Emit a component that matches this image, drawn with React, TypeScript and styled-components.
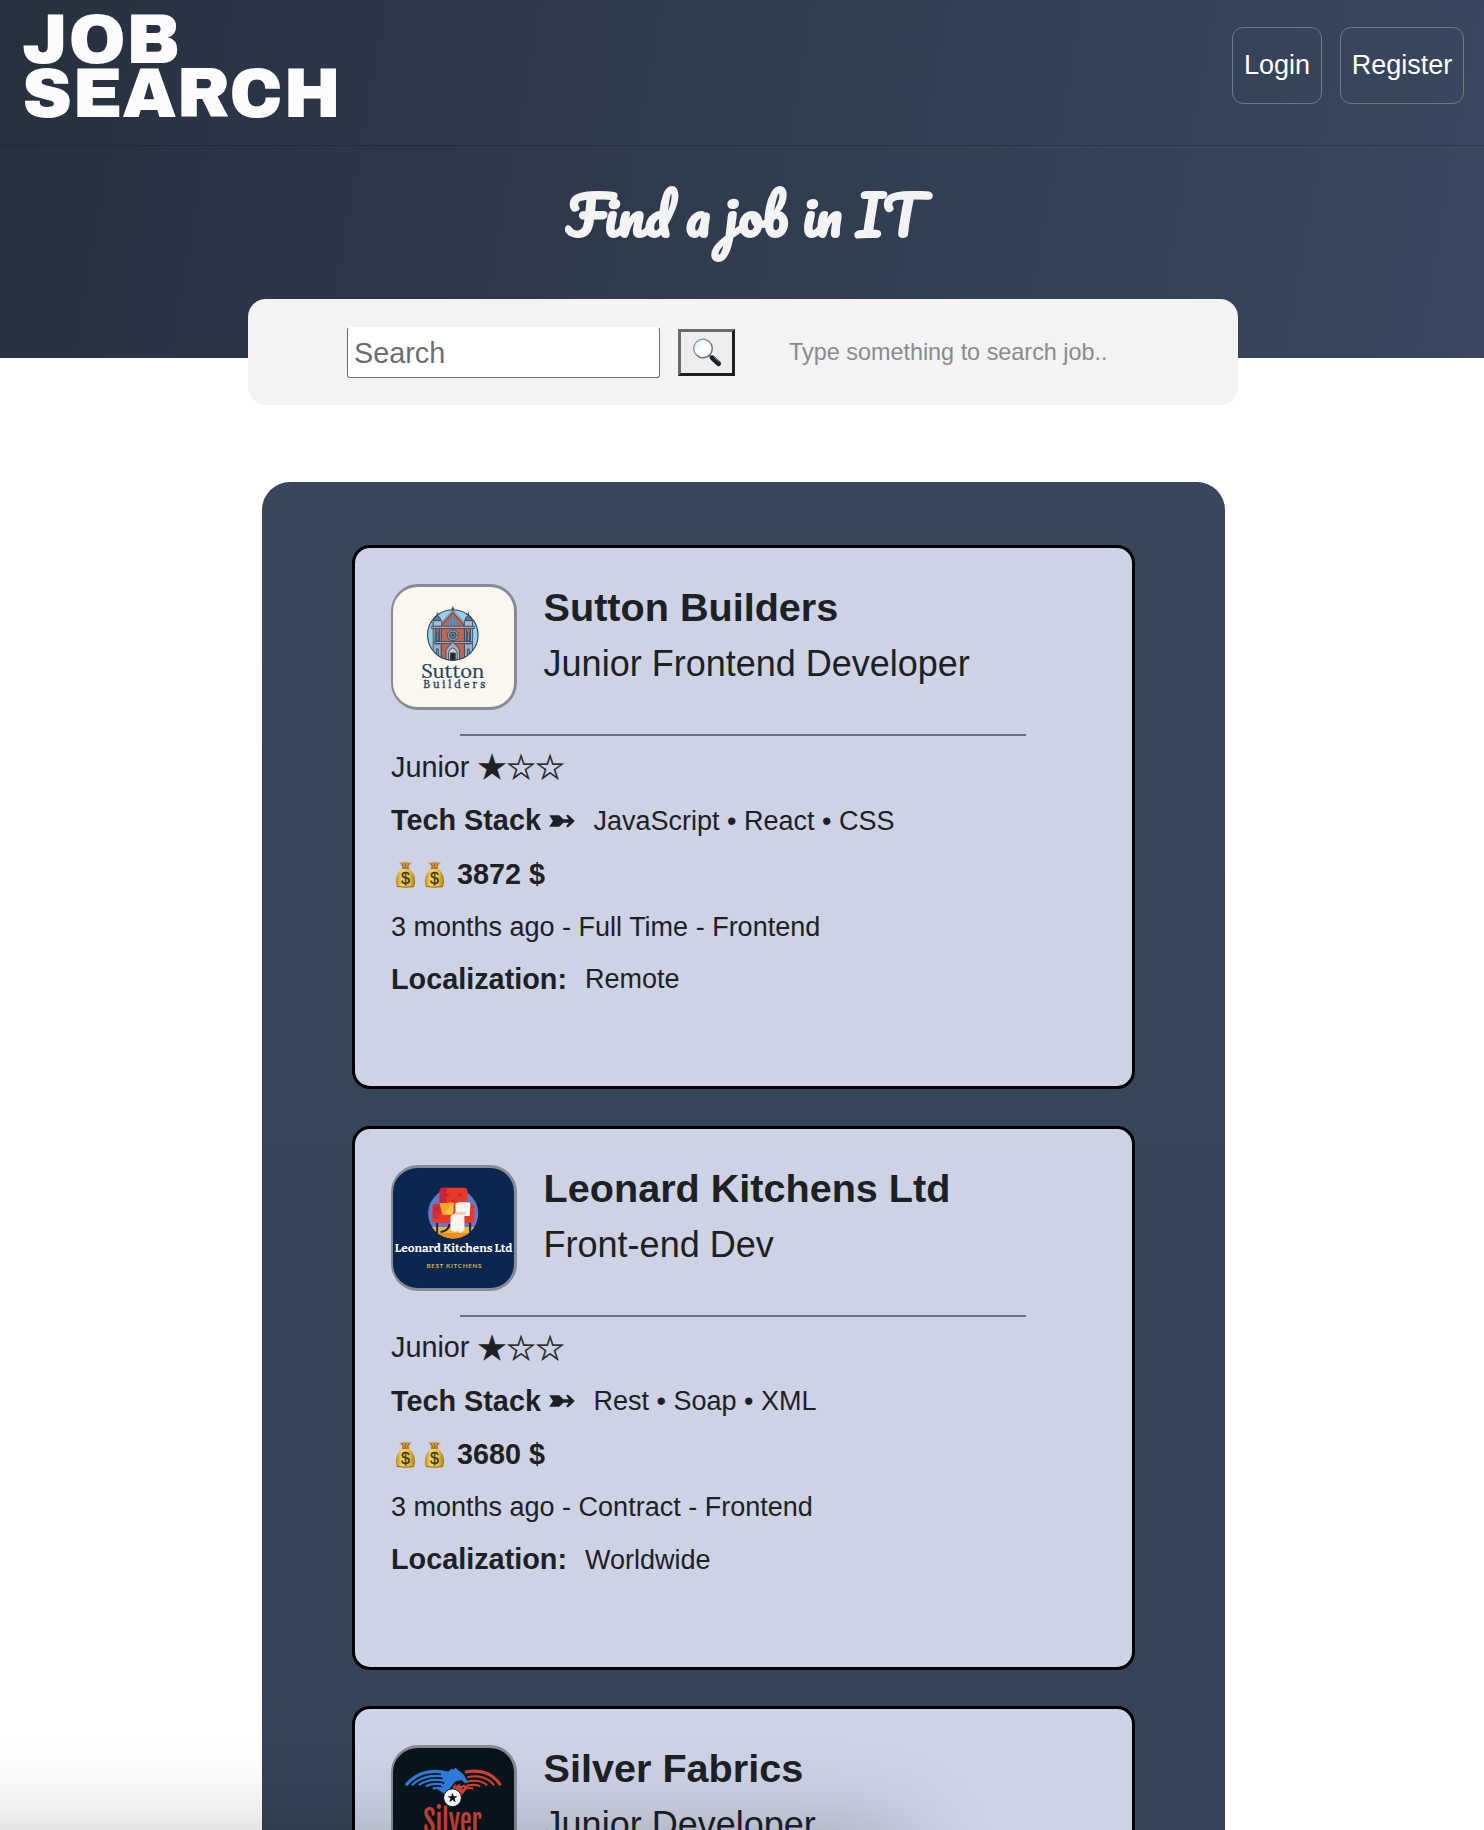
import React from "react";
import styled, { createGlobalStyle } from "styled-components";

const GlobalStyle = createGlobalStyle`
  *, *::before, *::after { box-sizing: border-box; }
  html, body { margin: 0; padding: 0; background: #fff; }
  body { font-family: "Liberation Sans", Arial, Helvetica, sans-serif; color: #1d2124; }
`;

const Page = styled.div`
  position: relative;
  height: 100vh;
  overflow: hidden;
  background: #fff;
`;

const Hero = styled.header`
  height: 358px;
  background: linear-gradient(100deg, #26313f 0%, #2d394b 35%, #334154 70%, #39485f 100%);
`;

const NavBar = styled.nav`
  display: flex;
  justify-content: space-between;
  align-items: flex-start;
  height: 146px;
  padding: 0 20px 0 0;
  border-bottom: 1px solid rgba(20, 28, 38, 0.35);
`;

const Wordmark = styled.svg`
  display: block;
  width: 360px;
  height: 140px;
  font-family: "Archivo Black", Inter, "Liberation Sans", sans-serif;
  font-weight: 900;
  font-synthesis: none;
  font-size: 70px;
  fill: #fcfcfc;
`;

const NavLinks = styled.div`
  display: flex;
  gap: 18px;
  padding-top: 27px;
`;

const NavButton = styled.a<{ $width: number }>`
  display: flex;
  align-items: center;
  justify-content: center;
  width: ${(p) => p.$width}px;
  height: 77px;
  padding-bottom: 1px;
  border: 1px solid #6e7a84;
  border-radius: 11px;
  color: #fff;
  font-size: 27px;
`;

const Slogan = styled.h1`
  margin: 0;
  padding-left: 566px;
  height: 152px;
  line-height: 137px;
  white-space: nowrap;
  font-family: Pacifico, Lato, sans-serif;
  font-weight: 400;
  font-size: 54px;
  color: #f3f3f3;
  -webkit-text-stroke: 2px #f3f3f3;
`;

const SearchPanel = styled.form`
  position: relative;
  display: flex;
  align-items: center;
  width: 990px;
  height: 106px;
  margin: -59px 0 0 248px;
  padding: 1px 0 0 99px;
  background: #f3f3f3;
  border-radius: 18px;
`;

const SearchInput = styled.input`
  width: 313px;
  height: 51px;
  padding: 2px 6px 0;
  border: 1px solid #6b6b6b;
  border-top-color: #fff;
  border-radius: 3px;
  background: #fff;
  font: 28.8px "Liberation Sans", Arial, sans-serif;
  &::placeholder { color: #6e6e6e; opacity: 1; }
`;

const SearchButton = styled.button`
  display: flex;
  align-items: center;
  justify-content: center;
  width: 57px;
  height: 47px;
  margin-left: 18px;
  padding: 0;
  border: 3px solid;
  border-color: #6b6b6b #1e1e1e #1e1e1e #6b6b6b;
  background: #ededed;
`;

const Hint = styled.span`
  margin-left: 54px;
  font-size: 23.4px;
  color: #898b8d;
`;

const JobList = styled.main`
  display: flex;
  flex-direction: column;
  align-items: center;
  gap: 36.5px;
  width: 963px;
  height: 1800px;
  margin: 77px 0 0 262px;
  padding-top: 63px;
  border-radius: 28px;
  background: linear-gradient(180deg, #38475c 0%, #354458 55%, #344256 100%);
`;

const Card = styled.article`
  flex: none;
  width: 783px;
  height: 544px;
  padding: 36px;
  border: 3px solid #000;
  border-radius: 18px;
  background: #cdd2e5;
`;

const CardHead = styled.div`
  display: flex;
  gap: 26.6px;
`;

const LogoFrame = styled.div<{ $bg: string }>`
  flex: none;
  width: 126px;
  height: 126px;
  border: 3px solid #878b96;
  border-left-width: 2px;
  border-radius: 27px;
  background: ${(p) => p.$bg};
  overflow: hidden;
`;

const LogoArt = styled.svg`
  display: block;
  width: 100%;
  height: 100%;
`;

const Company = styled.h2`
  margin: 0;
  font-size: 39.6px;
  line-height: 46px;
  white-space: nowrap;
`;

const Position = styled.h3`
  margin: 11px 0 0;
  font-size: 36px;
  font-weight: 400;
  line-height: 46px;
  white-space: nowrap;
`;

const Divider = styled.hr`
  width: 566px;
  height: 2px;
  margin: 24px 0 5px 69px;
  border: 0;
  background: #6d7080;
`;

const Row = styled.div<{ $size?: number; $drop?: number }>`
  display: flex;
  align-items: center;
  height: 52.8px;
  padding-top: ${(p) => p.$drop ?? 0}px;
  white-space: pre;
  font-size: ${(p) => p.$size ?? 28.8}px;
`;

const Stars = styled.span`
  margin-left: 7px;
  font-family: "DejaVu Sans", sans-serif;
  font-size: 34.6px;
  letter-spacing: -2px;
  line-height: 1;
  -webkit-text-stroke: 0.5px #1d2124;
`;

const Arrow = styled.svg`
  width: 26px;
  height: 14px;
  margin: 0 1px 0 8px;
`;

const Label = styled.strong`
  font-size: 28.8px;
`;

const Value = styled.span<{ $gap: number }>`
  margin-left: ${(p) => p.$gap}px;
  padding-top: 1px;
  font-size: 27px;
`;

const Bags = styled.span`
  display: flex;
  margin-right: 8px;
`;

const BagSvg = styled.svg`
  width: 29px;
  height: 29px;
`;

const BottomShade = styled.div`
  position: absolute;
  left: -200px;
  top: 100%;
  width: 1110px;
  height: 200px;
  box-shadow: 0 0 90px rgba(0, 0, 0, 0.2);
  pointer-events: none;
`;

function Magnifier() {
  return (
    <svg width="32" height="32" viewBox="0 0 32 32">
      <defs>
        <linearGradient id="glass" x1="0" y1="0" x2="1" y2="1">
          <stop offset="0" stopColor="#dfe9f3" />
          <stop offset="0.5" stopColor="#ffffff" />
          <stop offset="1" stopColor="#eeeeee" />
        </linearGradient>
        <linearGradient id="rim" x1="0" y1="0" x2="1" y2="1">
          <stop offset="0" stopColor="#8fb0d4" />
          <stop offset="1" stopColor="#4c4c4c" />
        </linearGradient>
      </defs>
      <path d="M18 18l4 4" stroke="#77797c" strokeWidth="2.4" />
      <path d="M21.3 20.8l6.3 5.8" stroke="#17202a" strokeWidth="5" strokeLinecap="round" />
      <path d="M22.4 19.6l6 5.5" stroke="#7d8894" strokeWidth="0.9" />
      <circle cx="12" cy="11.5" r="9.3" fill="url(#glass)" stroke="url(#rim)" strokeWidth="1.3" />
    </svg>
  );
}

function FeatherArrow() {
  return (
    <Arrow viewBox="0 0 26 14" fill="#1d2124">
      <path d="M0.3 1.2H10.2L14.4 5.2H19.8L17.2 1.8Q18.2 0.2 19.8 1.200L25.8 7L19.8 12.800Q18.2 13.800 17.2 12.200L19.8 8.800H14.4L10.2 12.800H0.300L4 7Z" />
    </Arrow>
  );
}

function MoneyBag() {
  return (
    <BagSvg viewBox="0 0 29 29">
      <defs>
        <linearGradient id="bag" x1="0" y1="0" x2="1" y2="0">
          <stop offset="0" stopColor="#b98a26" />
          <stop offset="0.3" stopColor="#f5d765" />
          <stop offset="0.7" stopColor="#e6bd45" />
          <stop offset="1" stopColor="#a87a20" />
        </linearGradient>
      </defs>
      <path d="M8 1.8l3.2 1 1.5-1.3 1.8 1.2 1.8-1.2 1.5 1.3 3.2-1-4 6h-5z" fill="#cf9a50" />
      <path d="M11 3l2 5M18 3l-2 5M14.5 3v5" stroke="#8b5a22" strokeWidth="0.8" />
      <path d="M11.6 8h5.8c4 3 6.7 8 6.7 13.5 0 4.2-1 6-3.4 6H8.3c-2.4 0-3.4-1.8-3.4-6C4.9 16 7.6 11 11.6 8z" fill="url(#bag)" />
      <path d="M6 26.3q8.500 2 17 0" fill="none" stroke="#956a1c" strokeWidth="1" />
      <rect x="10.6" y="7" width="7.8" height="2" rx="1" fill="#b9772f" />
      <text x="14.5" y="24" textAnchor="middle" fontFamily="Liberation Sans" fontSize="16" fill="#3b3424" stroke="#3b3424" strokeWidth="0.3">$</text>
    </BagSvg>
  );
}

function SuttonLogo() {
  const navy = "#27425f";
  return (
    <LogoArt viewBox="2.5 2.5 121 121">
      <defs>
        <clipPath id="round"><circle cx="62.3" cy="51" r="25.5" /></clipPath>
      </defs>
      <circle cx="62.3" cy="51" r="25.5" fill="#98cfe8" />
      <g clipPath="url(#round)" stroke={navy} strokeWidth="0.8">
        <path d="M42.5 38h8.2v42h-8.2zM74 38h8.2v42H74z" fill="#a7adb9" />
        <path d="M44.5 38h4.5v22h-4.5zM75.7 38h4.5v22h-4.5z" fill="#b5614e" />
        <path d="M50.7 40l11.6-13L74 40v40H50.7z" fill="#bd6652" />
        <path d="M49.5 40.5l12.8-14 12.8 14" fill="none" stroke="#8b96a5" strokeWidth="2" />
        <path d="M50 42l12.3-13.5L74.6 42" fill="none" />
        <path d="M41 42h43v2.4H41zM44 57.5h37v2H44z" fill="#a7adb9" />
        <path d="M45.7 49h2v8h-2zM77 49h2v8h-2zM45.7 65h2v7h-2zM77 65h2v7h-2z" fill="#49b0dc" stroke={navy} />
        <path d="M58.5 35.5h2V41h-2zM61.3 33h2v8h-2zM64.2 35.5h2V41h-2z" fill="#3ba7dc" stroke="#3a82b5" strokeWidth="0.4" />
        <circle cx="62.3" cy="51.3" r="5.4" fill="#a7adb9" />
        <circle cx="62.3" cy="51.3" r="3.5" fill="#788998" />
        <path d="M58 51.3h8.6M62.3 47v8.6M59.2 48.2l6.2 6.2M65.4 48.2l-6.2 6.2" strokeWidth="0.5" />
        <path d="M55.5 78V66l2-3 4.8-5 4.8 5 2 3v12z" fill="#a7adb9" />
        <path d="M58 78V68q4.3-8 8.6 0v10z" fill="#c8ccd2" />
        <path d="M59.8 78v-9h5v9z" fill="#35251b" />
      </g>
      <path d="M43 36.5q0-3.500 3.600-5.500 3.600 2 3.600 5.500zM74.500 36.500q0-3.500 3.600-5.500 3.600 2 3.600 5.500z" fill="#66758a" stroke={navy} strokeWidth="0.8" />
      <path d="M46.6 31v-3.2M78.1 31v-3.2M62.3 27v-5M60.8 24h3" stroke={navy} strokeWidth="0.9" />
      <path d="M42.5 36.5H51V42h-8.5zM74 36.5h8.2V42H74z" fill="#a8bdc9" stroke={navy} strokeWidth="0.7" />
      <circle cx="62.3" cy="51" r="25.5" fill="none" stroke={navy} strokeWidth="1.1" />
      <g fill={navy} stroke={navy} fontFamily="Lora, DejaVu Serif, Liberation Serif, serif">
        <text x="30.5" y="94" fontSize="20" strokeWidth="0.2" textLength="63.5" lengthAdjust="spacingAndGlyphs">Sutton</text>
        <text x="32.500" y="104.500" fontSize="11" strokeWidth="0.35" textLength="62.5">Builders</text>
      </g>
    </LogoArt>
  );
}

function LeonardLogo() {
  return (
    <LogoArt viewBox="2.5 2.5 121 121">
      <defs>
        <clipPath id="spot"><circle cx="62.7" cy="48.3" r="25.3" /></clipPath>
      </defs>
      <circle cx="62.7" cy="48.3" r="25.3" fill="#6878c6" />
      <g clipPath="url(#spot)">
        <path d="M36 62h54v14H36z" fill="#f5b536" />
        <path d="M44 68h38v8H44z" fill="#e98f24" />
      </g>
      <path d="M46.5 57v11M79.8 57v11M50 67q8-1 9-8" fill="none" stroke="#152342" strokeWidth="2" />
      <rect x="49" y="22.3" width="28" height="28" rx="3.5" fill="#ea3829" />
      <path d="M52 22.3h4v17h-7V25q0-2 3-2.7z" fill="#c8233a" />
      <path d="M54.5 28l4 4m0-4l-4 4M67.5 28l4 4m0-4l-4 4M60.5 34l4 4m0-4l-4 4" stroke="#b51f36" strokeWidth="1" />
      <path d="M42 42q0-3.500 4-3.500t4 3.500v7h25v-7q0-3.500 4.500-3.500T84 42v13q0 3-4 3H46q-4 0-4-3z" fill="#ea3829" />
      <path d="M42 42q0-3.500 4-3.500t4 3.500v7l-4 5-4-1z" fill="#d62d38" />
      <path d="M44 42l4 4m0-4l-4 4" stroke="#a71d37" strokeWidth="1" />
      <path d="M49 38l14-1-1 13H52z" fill="#f2a727" />
      <path d="M63 37.5V48q-4 3-9 0z" fill="#ffc34a" />
      <path d="M65 38q6-2 15-.5L79.5 51H74v14l-4 3-3-2-3 1-4-1.500V51l5-3z" fill="#fff2ef" />
      <path d="M66 46.5h9V50h-10z" fill="#f0cfc0" />
      <text x="3.8" y="87.3" fill="#fff" fontFamily="Bitter, DejaVu Serif, serif" fontWeight="700" fontSize="11.5" textLength="118.5" lengthAdjust="spacingAndGlyphs">Leonard Kitchens Ltd</text>
      <text x="35.7" y="103.2" fill="#d2b544" fontFamily="Lato, sans-serif" fontWeight="700" fontSize="6.4" textLength="55.5">BEST KITCHENS</text>
    </LogoArt>
  );
}

function SilverLogo() {
  return (
    <LogoArt viewBox="2.5 2.5 121 121">
      <g fill="none" strokeWidth="2.2">
        <g stroke="#2f7de0">
          <path d="M15 40q16-19 43-12" strokeWidth="3.2" />
          <path d="M21 40q14-13 36-8M28 40q11-8 27-4M35 41q9-4 19-1M42 43.5q7-2 12 1" />
        </g>
        <g stroke="#cf4336">
          <path d="M110.5 40q-12-18-36-13" strokeWidth="3.2" />
          <path d="M104 40q-10-12-27-8M97 40q-9-7-22-3M90 41q-8-3-17 1M83 43.5q-7-2-11 2" />
        </g>
      </g>
      <path d="M50 28l7-1 4-3.500 2 1 2-2 3 2.500 5 4 4 7-2 2-4-3-6 1-5 6-3 9-7-5-6-4 8 1-3-5 5 1z" fill="#2f7de0" />
      <path d="M62 42l3-4v3l5-3-1 3 6-2-4 5 6-1-7 9-4-3z" fill="#cf4336" />
      <circle cx="62" cy="52.7" r="9" fill="#fff" stroke="#08151d" strokeWidth="1" />
      <path d="M62 47.5l1.3 3.6 3.8.1-3 2.3 1.1 3.7-3.2-2.2-3.2 2.2 1.1-3.7-3-2.3 3.8-.1z" fill="#08151d" />
      <text x="32.5" y="88.500" fill="#cf4336" fontFamily="'Fjalla One', Oswald, 'Liberation Sans Narrow', 'Liberation Sans', sans-serif" fontWeight="400" fontSize="31" textLength="59" lengthAdjust="spacingAndGlyphs">Silver</text>
    </LogoArt>
  );
}

type Job = {
  company: string;
  position: string;
  stack: string[];
  salary: number;
  contract: string;
  place: string;
  logoBg: string;
  logo: React.ReactNode;
};

const jobs: Job[] = [
  { company: "Sutton Builders", position: "Junior Frontend Developer", stack: ["JavaScript", "React", "CSS"], salary: 3872, contract: "Full Time", place: "Remote", logoBg: "#faf7ee", logo: <SuttonLogo /> },
  { company: "Leonard Kitchens Ltd", position: "Front-end Dev", stack: ["Rest", "Soap", "XML"], salary: 3680, contract: "Contract", place: "Worldwide", logoBg: "#0b2650", logo: <LeonardLogo /> },
  { company: "Silver Fabrics", position: "Junior Developer", stack: ["HTML", "CSS"], salary: 3500, contract: "Full Time", place: "Remote", logoBg: "#08151d", logo: <SilverLogo /> },
];

function JobCard({ job }: { job: Job }) {
  return (
    <Card>
      <CardHead>
        <LogoFrame $bg={job.logoBg}>{job.logo}</LogoFrame>
        <div>
          <Company>{job.company}</Company>
          <Position>{job.position}</Position>
        </div>
      </CardHead>
      <Divider />
      <Row>Junior<Stars>★☆☆</Stars></Row>
      <Row $drop={1}>
        <Label>Tech Stack</Label>
        <FeatherArrow />
        <Value $gap={17.5}>{job.stack.join(" • ")}</Value>
      </Row>
      <Row $drop={3}>
        <Bags><MoneyBag /><MoneyBag /></Bags>
        <Label>{job.salary} $</Label>
      </Row>
      <Row $size={27} $drop={3}>3 months ago - {job.contract} - Frontend</Row>
      <Row $drop={1}>
        <Label>Localization:</Label>
        <Value $gap={18}>{job.place}</Value>
      </Row>
    </Card>
  );
}

export default function App() {
  return (
    <Page>
      <GlobalStyle />
      <Hero>
        <NavBar>
          <Wordmark viewBox="0 0 360 140">
            <text x="22" y="62.5" textLength="158" lengthAdjust="spacingAndGlyphs">JOB</text>
            <text x="22" y="116.5" textLength="319" lengthAdjust="spacingAndGlyphs">SEARCH</text>
          </Wordmark>
          <NavLinks>
            <NavButton $width={90}>Login</NavButton>
            <NavButton $width={124}>Register</NavButton>
          </NavLinks>
        </NavBar>
        <Slogan>Find a job in IT</Slogan>
      </Hero>
      <SearchPanel>
        <SearchInput placeholder="Search" />
        <SearchButton type="button" aria-label="Search"><Magnifier /></SearchButton>
        <Hint>Type something to search job..</Hint>
      </SearchPanel>
      <JobList>
        {jobs.map((job) => <JobCard key={job.company} job={job} />)}
      </JobList>
      <BottomShade />
    </Page>
  );
}
